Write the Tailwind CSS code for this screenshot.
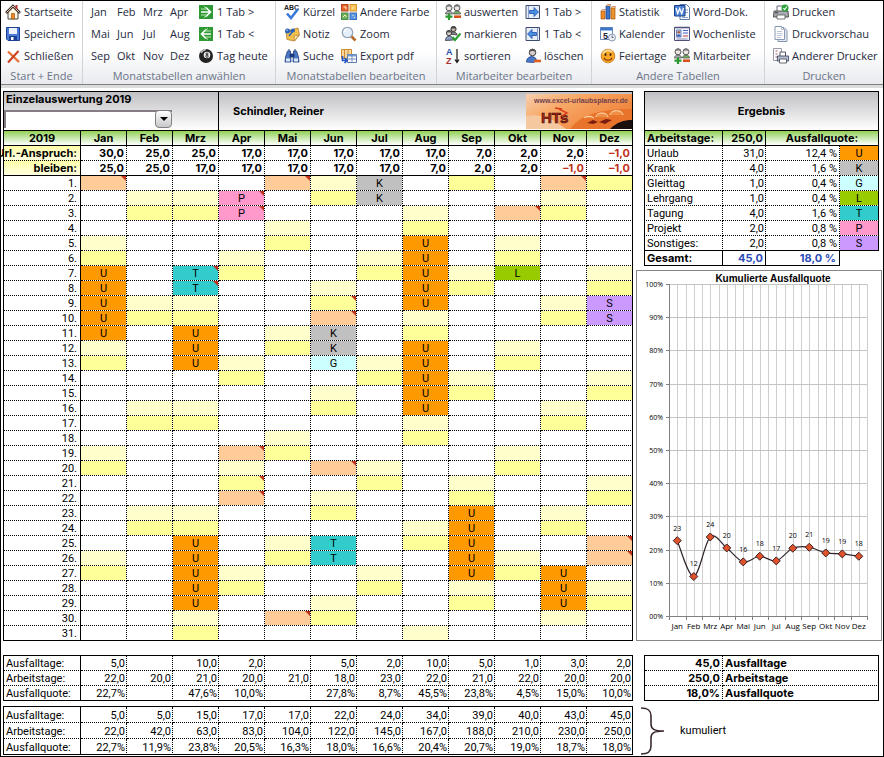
<!DOCTYPE html>
<html lang="de">
<head>
    <meta charset="UTF-8">
    <meta name="viewport" content="width=device-width, initial-scale=1.0">
    <title>Urlaubsplaner 2019 - Einzelauswertung</title>
    <script src="https://cdn.jsdelivr.net/npm/@tailwindcss/browser@4"></script>
</head>
<body class="bg-white text-black">
    <!-- Icon set -->
    <svg class="hidden">
        <symbol id="i-home" viewBox="0 0 16 16"><path d="M3 8v7h10V8L8 3z" fill="#fff6e0" stroke="#444"/><path d="M1 9l7-7 7 7" fill="none" stroke="#333" stroke-width="2.6"/><path d="M1.500 8.500L8 2l6.500 6.500" fill="none" stroke="#f0c0a0" stroke-width="1"/><path d="M11.500 1v4" fill="none" stroke="#b33" stroke-width="2"/><path d="M6.500 9.500h3V15h-3z" fill="#f08a1c" stroke="#8a4a10" stroke-width=".6"/></symbol>
        <symbol id="i-save" viewBox="0 0 16 16"><path d="M1.500 1.500h13v13H3l-1.500-1.500z" fill="#4a7ad8" stroke="#1d3f94"/><path d="M4 2h8v6H4z" fill="#eef3fb"/><path d="M4 10h8v4.500H4z" fill="#1d3f94"/><path d="M6 11h2.500v3H6z" fill="#fff"/></symbol>
        <symbol id="i-close" viewBox="0 0 16 16"><path d="M3 3.500L14 14" stroke="#e8703a" stroke-width="2.400"/><path d="M13.500 3L3 14.500" stroke="#c8401c" stroke-width="2"/></symbol>
        <symbol id="i-next" viewBox="0 0 16 16"><rect x="1" y="1" width="14" height="14" fill="#2f9a35"/><path d="M3 8h9M8 3.500L12.500 8 8 12.500" fill="none" stroke="#fff" stroke-width="1.600"/><path d="M3 5h6M3 11h6M6 2.500l3 2M6 13.500l3-2" stroke="#b8e6b0"/></symbol>
        <symbol id="i-prev" viewBox="0 0 16 16"><rect x="1" y="1" width="14" height="14" fill="#2f9a35"/><path d="M13 8H4M8 3.500L3.500 8 8 12.500" fill="none" stroke="#fff" stroke-width="1.600"/><path d="M7 5h6M7 11h6M10 2.500l-3 2M10 13.500l-3-2" stroke="#b8e6b0"/></symbol>
        <symbol id="i-ball" viewBox="0 0 16 16"><circle cx="8" cy="8" r="7" fill="#222"/><path d="M3 5a6 6 0 0 1 5-3.500" stroke="#bbb" stroke-width="1.500" fill="none"/><circle cx="9" cy="7" r="3.300" fill="#eee"/><circle cx="9" cy="5.900" r="1" fill="none" stroke="#111" stroke-width=".8"/><circle cx="9" cy="8.200" r="1.200" fill="none" stroke="#111" stroke-width=".8"/></symbol>
        <symbol id="i-abc" viewBox="0 0 16 16"><text x="0" y="6" font-size="7" font-weight="bold" font-family="Liberation Sans, sans-serif" fill="#222">ABC</text><path d="M3 9.500l4 4.500 7-9" fill="none" stroke="#3a7ad8" stroke-width="2.600"/></symbol>
        <symbol id="i-note" viewBox="0 0 16 16"><path d="M2 5l12-3 1.500 7-5 6L3 13.500z" fill="#f6c04c" stroke="#a8702a" stroke-width=".7"/><path d="M15 9l-4.500 6-.5-5z" fill="#fde9a8" stroke="#a8702a" stroke-width=".6"/><circle cx="3.500" cy="5" r="2.500" fill="#2b62b8"/><circle cx="9" cy="4.500" r="2" fill="#2b62b8"/><path d="M4 5h5l-4 5" stroke="#2b62b8" stroke-width="1.500" fill="none"/><circle cx="3" cy="4.300" r=".8" fill="#b6d6f8"/></symbol>
        <symbol id="i-find" viewBox="0 0 16 16"><path d="M3.500 3h3v4l.5 7H1l.5-5zM9.500 3h3l2 6 .5 5H9l.500-7z" fill="#4c78c4" stroke="#1f3c80" stroke-width=".8"/><path d="M6 6h4v3H6zM4 2h2M10 2h2" fill="#1f3c80" stroke="#1f3c80"/><path d="M2 10.500h4v3H2zM10 10.500h4v3h-4z" fill="#dce8fa"/></symbol>
        <symbol id="i-color" viewBox="0 0 16 16"><rect x=".5" y=".5" width="6.500" height="6.500" fill="#e8622c" stroke="#b8481c"/><rect x="9" y=".5" width="6.500" height="6.500" fill="#f8c45c" stroke="#d89428"/><rect x=".5" y="9" width="6.500" height="6.500" fill="#6cb060" stroke="#4a8a48"/><rect x="9" y="9" width="6.500" height="6.500" fill="#5c98e0" stroke="#3a6ec0"/><path d="M2.500 3h2.500v2.500M2 13l2-2 1.500 2M11 4h2M11.500 11.500h1M13 13.500h1" fill="none" stroke="#fff3c0"/></symbol>
        <symbol id="i-zoom" viewBox="0 0 16 16"><path d="M10 10l4.500 4.500" stroke="#b86a28" stroke-width="2.600"/><circle cx="6.500" cy="6.500" r="5.200" fill="#e6f0fa" stroke="#98a4b4" stroke-width="1.300"/><path d="M3.500 6a3 3 0 0 1 3-2.800" stroke="#fff" stroke-width="1.200" fill="none"/></symbol>
        <symbol id="i-export" viewBox="0 0 16 16"><path d="M.5 1.500h10v9H.500z" fill="#fbd9a0" stroke="#d08a30"/><path d="M3.500 1.500v9M7 1.500v9" stroke="#d08a30"/><path d="M6.500 6.500h9v8h-9z" fill="#fff" stroke="#5878a8"/><path d="M6.500 6.500h9v2h-9z" fill="#7c9cd0"/><path d="M6.500 11h9M11 7v7.500" stroke="#5878a8" stroke-width=".8"/><path d="M1.500 8v4.500H5M3.500 10l2.500 2.500L3.500 15" fill="none" stroke="#2458c8" stroke-width="1.700"/></symbol>
        <symbol id="i-people" viewBox="0 0 16 16"><path d="M.5 10c0-4 7-4 7 0z" fill="#a8a8b0" stroke="#555" stroke-width=".8"/><circle cx="4" cy="3.800" r="3" fill="#f0e8e4" stroke="#555"/><path d="M1 3.500c0-4 6-4 6 0-2-1.500-4-1.500-6 0z" fill="#777"/><path d="M8.500 10c0-4 7-4 7 0z" fill="#70b060" stroke="#555" stroke-width=".8"/><circle cx="12" cy="3.800" r="3" fill="#f0e8e4" stroke="#555"/><path d="M9 3.500c0-4 6-4 6 0-2-1.500-4-1.500-6 0z" fill="#777"/><path d="M4 9.500V16M.5 12.700h7" stroke="#2c9a30" stroke-width="2.200"/><path d="M9 12.700h7" stroke="#d8501c" stroke-width="2.600"/></symbol>
        <symbol id="i-mark" viewBox="0 0 16 16"><path d="M5 8c0-3 7-3 7 1z" fill="#888" stroke="#333" stroke-width=".8"/><circle cx="8.500" cy="3" r="2.600" fill="#c8b8a8" stroke="#333"/><path d="M6 2.500c1-3 4-3 5 0z" fill="#444"/><path d="M.5 14.500c0-6 7-6 8-.5z" fill="#8a9cc8" stroke="#333" stroke-width=".8"/><circle cx="4" cy="7" r="2.600" fill="#e0d8d8" stroke="#333"/><path d="M1.500 6.500c1-3 4-3 5 0z" fill="#555"/><path d="M7.500 11l2.500 3 5.500-6.500" fill="none" stroke="#2ca030" stroke-width="2.200"/></symbol>
        <symbol id="i-sort" viewBox="0 0 16 16"><text x="1" y="7" font-size="9" font-weight="bold" font-family="Liberation Sans, sans-serif" fill="#2850a8">A</text><text x="1" y="15.500" font-size="9" font-weight="bold" font-family="Liberation Sans, sans-serif" fill="#a83030">Z</text><path d="M12 1v13M10 11.500l2 3 2-3" fill="none" stroke="#111" stroke-width="1.200"/></symbol>
        <symbol id="i-tabnext" viewBox="0 0 16 16"><path d="M1 1.500h13.500v13H1z" fill="#e8eef8" stroke="#3c4c70"/><path d="M3.500 2v12" stroke="#8ca0c8"/><path d="M4.500 6.500H9v-3L13.500 8 9 12.500v-3H4.500z" fill="#4a90e0" stroke="#1c4ea8" stroke-width=".8"/></symbol>
        <symbol id="i-tabprev" viewBox="0 0 16 16"><path d="M1 1.500h13.500v13H1z" fill="#e8eef8" stroke="#3c4c70"/><path d="M12.500 2v12" stroke="#8ca0c8"/><path d="M11.500 6.500H7v-3L2.500 8 7 12.500v-3h4.500z" fill="#4a90e0" stroke="#1c4ea8" stroke-width=".8"/></symbol>
        <symbol id="i-userdel" viewBox="0 0 16 16"><path d="M1.500 14c0-7 10-7 10-1l-3 1.500z" fill="#4c78c8" stroke="#28448c" stroke-width=".8"/><circle cx="7.500" cy="4.500" r="3.300" fill="#d8cccc" stroke="#444"/><path d="M4 4.500c0-5 7-5 7 0-2-2-5-2-7 0z" fill="#555"/><path d="M9 13h7" stroke="#e0601c" stroke-width="2.600"/></symbol>
        <symbol id="i-stat" viewBox="0 0 16 16"><path d="M1 7h4v8H1z" fill="#f08c28" stroke="#a85410" stroke-width=".7"/><path d="M6 2h4v13H6z" fill="#3c74c8" stroke="#1c4488" stroke-width=".7"/><path d="M11 4h4v11h-4z" fill="#e8942c" stroke="#a85410" stroke-width=".7"/><path d="M6 2l1.500-1.500h3.500L10 2M1 7l1.500-1.500H6M11 4l1-1.500h3.500L15 4" fill="#f8c878" stroke="#844" stroke-width=".5"/></symbol>
        <symbol id="i-cal" viewBox="0 0 16 16"><path d="M.5 1.500h12v12H.500z" fill="#fff" stroke="#6888b8"/><path d="M.5 1.500h12v3H.500z" fill="#3c78c8"/><text x="3" y="12.500" font-size="9" font-weight="bold" font-family="Liberation Sans, sans-serif" fill="#223">5</text><circle cx="12" cy="11.500" r="3.500" fill="#eef2f8" stroke="#8898b0"/><path d="M12 9.500v2h1.500" fill="none" stroke="#335" stroke-width=".8"/></symbol>
        <symbol id="i-smile" viewBox="0 0 16 16"><circle cx="8" cy="8" r="6.800" fill="#f8a828" stroke="#c86c10" stroke-width=".8"/><path d="M3 6a5.500 5.500 0 0 1 9-2" stroke="#fde49c" stroke-width="1.600" fill="none"/><ellipse cx="5.500" cy="6.500" rx="1" ry="1.500" fill="#4a2408"/><ellipse cx="10.500" cy="6.500" rx="1" ry="1.500" fill="#4a2408"/><path d="M4 10c1.500 3 6.500 3 8 0" fill="none" stroke="#7a3408" stroke-width="1.200"/></symbol>
        <symbol id="i-word" viewBox="0 0 16 16"><path d="M6 .5h6.500l3 3v12H6z" fill="#fff" stroke="#5878a8"/><path d="M11 6h3M11 8.500h3M8 13.500h6" stroke="#88a0c8"/><path d="M.5 1.500h10.500v10.500H.500z" fill="#4c80d0" stroke="#16408c"/><path d="M2 4l1.700 5.500 2-5 2 5L9.500 4" fill="none" stroke="#fff" stroke-width="1.300"/></symbol>
        <symbol id="i-week" viewBox="0 0 16 16"><path d="M.5 1.500h15v13H.500z" fill="#f4f4fc" stroke="#50507c"/><path d="M.5 1.500h15" stroke="#50507c" stroke-width="1.500"/><path d="M2.500 4h4.500v7H2.500z" fill="#c8d8f4" stroke="#4868a8" stroke-width=".8"/><circle cx="4.700" cy="6.200" r="1.300" fill="#a85838"/><path d="M3 10.500c0-3 3.500-3 3.500 0z" fill="#3858b0"/><path d="M9 4.500h5M9 7h5" stroke="#4868c8"/><path d="M9 10h5" stroke="#c04838"/><path d="M2.500 13h11" stroke="#8890b8"/></symbol>
        <symbol id="i-print" viewBox="0 0 16 16"><path d="M4 7V2h7v5" fill="#fff" stroke="#667"/><path d="M1 7h14l.5 6H.500z" fill="#a8acb4" stroke="#444" stroke-width=".9"/><path d="M4 11h8v4H4z" fill="#fff" stroke="#555" stroke-width=".8"/><path d="M2 8.800h3" stroke="#333"/><circle cx="12" cy="4" r="3.500" fill="#2ca038"/><path d="M10.300 4l1.300 1.500 2.200-3" fill="none" stroke="#fff" stroke-width="1.100"/></symbol>
        <symbol id="i-preview" viewBox="0 0 16 16"><path d="M5 1.500h6l3 3v11H5z" fill="#e0e8f4" stroke="#8898b0"/><path d="M2 .5h6.500l3 3v10H2z" fill="#fff" stroke="#8898b0"/><path d="M8.500.5v3h3M4 5.500h5M4 7.500h5.500M4 9.500h5.500M4 11.500h4" fill="none" stroke="#a8b4c8" stroke-width=".8"/></symbol>
        <symbol id="i-printer2" viewBox="0 0 16 16"><path d="M.5.500h8v12h-8z" fill="#fff" stroke="#99a"/><path d="M2.500 3h2M2.500 6h2M2.500 9h2" stroke="#a05868" stroke-width="1.200"/><path d="M7 8V4h5.500v4" fill="#fff" stroke="#556"/><path d="M4.500 8h11l.2 5H4.300z" fill="#b8bed0" stroke="#404860" stroke-width=".9"/><path d="M6.500 11h7v4h-7z" fill="#fff" stroke="#445" stroke-width=".8"/></symbol>
    </svg>

    <div class="min-h-screen overflow-hidden border border-black font-['Inter',sans-serif] text-[11px] leading-[14px]">
        <!-- Ribbon -->
        <nav class="grid grid-cols-[82fr_193fr_161fr_155fr_173fr_118fr] border-b border-[#808080] bg-linear-to-b from-white from-60% to-[#e8eaee] font-['Open_Sans',sans-serif] text-[#262a3c] [&_button]:flex [&_button]:h-[22px] [&_button]:items-center [&_button]:gap-[3px] [&_button]:whitespace-nowrap [&_h2]:h-[17px] [&_h2]:text-center [&_h2]:leading-[17px] [&_h2]:text-[#6b7488] [&_svg]:size-4 [&_svg]:shrink-0">
            <section class="border-r border-[#d0d3d8]">
                <div class="pl-1">
                    <button><svg><use href="#i-home"/></svg>Startseite</button>
                    <button><svg><use href="#i-save"/></svg>Speichern</button>
                    <button><svg><use href="#i-close"/></svg>Schließen</button>
                </div>
                <h2>Start + Ende</h2>
            </section>
            <section class="border-r border-[#d0d3d8]">
                <div class="grid grid-cols-[26px_26px_27px_28px_auto] pl-2">
                    <button>Jan</button><button>Feb</button><button>Mrz</button><button>Apr</button>
                    <button><svg><use href="#i-next"/></svg>1 Tab &gt;</button>
                    <button>Mai</button><button>Jun</button><button>Jul</button><button>Aug</button>
                    <button><svg><use href="#i-prev"/></svg>1 Tab &lt;</button>
                    <button>Sep</button><button>Okt</button><button>Nov</button><button>Dez</button>
                    <button><svg><use href="#i-ball"/></svg>Tag heute</button>
                </div>
                <h2>Monatstabellen anwählen</h2>
            </section>
            <section class="border-r border-[#d0d3d8]">
                <div class="grid grid-cols-[57px_auto] pl-2">
                    <button><svg><use href="#i-abc"/></svg>Kürzel</button>
                    <button><svg><use href="#i-color"/></svg>Andere Farbe</button>
                    <button><svg><use href="#i-note"/></svg>Notiz</button>
                    <button><svg><use href="#i-zoom"/></svg>Zoom</button>
                    <button><svg><use href="#i-find"/></svg>Suche</button>
                    <button><svg><use href="#i-export"/></svg>Export pdf</button>
                </div>
                <h2>Monatstabellen bearbeiten</h2>
            </section>
            <section class="border-r border-[#d0d3d8]">
                <div class="grid grid-cols-[80px_auto] pl-2">
                    <button><svg><use href="#i-people"/></svg>auswerten</button>
                    <button><svg><use href="#i-tabnext"/></svg>1 Tab &gt;</button>
                    <button><svg><use href="#i-mark"/></svg>markieren</button>
                    <button><svg><use href="#i-tabprev"/></svg>1 Tab &lt;</button>
                    <button><svg><use href="#i-sort"/></svg>sortieren</button>
                    <button><svg><use href="#i-userdel"/></svg>löschen</button>
                </div>
                <h2>Mitarbeiter bearbeiten</h2>
            </section>
            <section class="border-r border-[#d0d3d8]">
                <div class="grid grid-cols-[74px_auto] pl-2">
                    <button><svg><use href="#i-stat"/></svg>Statistik</button>
                    <button><svg><use href="#i-word"/></svg>Word-Dok.</button>
                    <button><svg><use href="#i-cal"/></svg>Kalender</button>
                    <button><svg><use href="#i-week"/></svg>Wochenliste</button>
                    <button><svg><use href="#i-smile"/></svg>Feiertage</button>
                    <button><svg><use href="#i-people"/></svg>Mitarbeiter</button>
                </div>
                <h2>Andere Tabellen</h2>
            </section>
            <section>
                <div class="pl-2">
                    <button><svg><use href="#i-print"/></svg>Drucken</button>
                    <button><svg><use href="#i-preview"/></svg>Druckvorschau</button>
                    <button><svg><use href="#i-printer2"/></svg>Anderer Drucker</button>
                </div>
                <h2>Drucken</h2>
            </section>
        </nav>
        <div class="h-[3px] bg-[#dcdcdc]"></div>

        <main class="grid grid-cols-[630fr_246fr] gap-x-[3px] pt-[3px] pr-px pl-[2px]">
            <!-- Year overview -->
            <table class="w-full table-fixed border-separate border-spacing-0 border-t border-l border-black">
                <colgroup><col class="w-[77px]"><col span="12"></colgroup>
                <thead>
                    <tr>
                        <td colspan="4" class="h-[39px] border-r border-b border-black bg-linear-to-b from-[#c0c0c4] to-white p-0 align-top">
                            <label for="employee" class="block px-[2px] leading-[14px] font-bold">Einzelauswertung 2019</label>
                            <div class="relative mt-1 w-[168px]">
                                <select id="employee" class="block h-[18px] w-full appearance-none border-t-2 border-l-2 border-[#857c86] bg-white px-1"><option></option></select>
                                <span class="pointer-events-none absolute top-0 right-0 flex h-[18px] w-[17px] items-center justify-center rounded-sm border border-[#808080] bg-linear-to-b from-white to-[#c8c8cc]"><svg class="h-1 w-2" viewBox="0 0 8 4"><path d="M0 0h8L4 4z"/></svg></span>
                            </div>
                        </td>
                        <td colspan="9" class="h-[39px] border-r border-b border-black bg-linear-to-b from-[#c0c0c4] to-white p-0">
                            <div class="flex items-center justify-between pl-[14px]">
                                <span class="font-bold">Schindler, Reiner</span>
                                <svg class="h-[35px] w-[106px]" viewBox="0 0 106 35">
                                    <defs><linearGradient id="sky" x1="0" y1="0" x2="1" y2=".6"><stop offset="0" stop-color="#f6cfae"/><stop offset=".4" stop-color="#f8a866"/><stop offset="1" stop-color="#ee8038"/></linearGradient></defs>
                                    <rect width="106" height="35" fill="url(#sky)"/>
                                    <path d="M0 22c14-3 26 2 40 13H0z" fill="#f6c8a0"/>
                                    <path d="M44 35c8-10 20-20 62-20v20z" fill="#e8742c"/>
                                    <path d="M84 35c7-7 14-9 22-9v9z" fill="#1c100e"/>
                                    <path d="M61 29l6-3 5 2-5 2zM73 28l7-3 6 1-7 4z" fill="#7a1c10"/>
                                    <path d="M58 24a6 4 0 0 1 10 0M70 23a6 4 0 0 1 12 0M84 21a6 4 0 0 1 13 0" fill="#f09048" stroke="#fde0b8"/>
                                    <text x="8" y="9" font-size="7" font-weight="bold" font-family="Liberation Sans, sans-serif" fill="#70404c">www.excel-urlaubsplaner.de</text>
                                    <text x="15" y="29" font-size="15" font-weight="bold" font-family="Liberation Sans, sans-serif" fill="#a82414" stroke="#3a100c" stroke-width=".6">HTs</text>
                                    <path d="M33 15l8 4-5 3M29 14l7 1" fill="none" stroke="#d8401c" stroke-width="1.500"/>
                                </svg>
                            </div>
                        </td>
                    </tr>
                    <tr id="months"></tr>
                </thead>
                <tbody id="claims"></tbody>
                <tbody id="days"></tbody>
            </table>

            <!-- Result and chart -->
            <div>
                <div class="mr-[3px] ml-2">
                    <table class="w-full table-fixed border-separate border-spacing-0">
                        <colgroup><col class="w-[79px]"><col class="w-[43px]"><col><col class="w-[39px]"></colgroup>
                        <thead>
                            <tr><th colspan="4" class="h-10 border border-black bg-linear-to-b from-[#c0c0c4] to-white p-0 font-bold">Ergebnis</th></tr>
                            <tr class="[&>*]:bg-linear-to-b [&>*]:from-[#92d050] [&>*]:to-white">
                                <th class="h-[15px] border-x border-b border-black p-0 pl-[2px] text-left font-bold">Arbeitstage:</th>
                                <th class="border-r border-b border-black p-0 pr-[2px] text-right font-bold">250,0</th>
                                <th colspan="2" class="border-r border-b border-black p-0 font-bold">Ausfallquote:</th>
                            </tr>
                        </thead>
                        <tbody id="result"></tbody>
                        <tfoot>
                            <tr class="font-bold">
                                <td class="h-[15px] border-x border-b border-black p-0 pl-[2px]">Gesamt:</td>
                                <td class="border-r border-b border-black p-0 pr-[2px] text-right text-[#2c4cb8]">45,0</td>
                                <td class="border-r border-b border-black p-0 pr-[3px] text-right text-[#2c4cb8]">18,0 %</td>
                                <td></td>
                            </tr>
                        </tfoot>
                    </table>
                </div>
                <svg id="chart" class="mt-1 block w-full" viewBox="0 0 246 371" font-family="Open Sans, sans-serif" font-size="7"></svg>
            </div>

            <!-- Monthly and cumulated sums -->
            <table id="monthly" class="mt-[14px] w-full table-fixed border-separate border-spacing-0 border-t border-l border-black"></table>
            <div class="mt-[14px] mr-[3px] ml-2">
                <table class="w-full table-fixed border-separate border-spacing-0 border-t border-l border-black font-bold">
                    <colgroup><col class="w-[78px]"><col></colgroup>
                    <tbody>
                        <tr><td class="h-[15px] border-r border-b border-dotted border-black p-0 pr-[2px] text-right">45,0</td><td class="border-r border-b border-black p-0 pl-[2px] [border-bottom-style:dotted]">Ausfalltage</td></tr>
                        <tr><td class="h-[15px] border-r border-b border-dotted border-black p-0 pr-[2px] text-right">250,0</td><td class="border-r border-b border-black p-0 pl-[2px] [border-bottom-style:dotted]">Arbeitstage</td></tr>
                        <tr><td class="h-[15px] border-r border-b border-black p-0 pr-[2px] text-right [border-right-style:dotted]">18,0%</td><td class="border-r border-b border-black p-0 pl-[2px]">Ausfallquote</td></tr>
                    </tbody>
                </table>
            </div>
            <table id="cumulated" class="mt-[5px] w-full table-fixed border-separate border-spacing-0 border-t border-l border-black"></table>
            <div class="mt-[5px] flex items-center gap-3 pl-1 font-['Roboto',sans-serif]">
                <svg class="h-12 w-7" viewBox="0 0 28 48"><path d="M1 1c7 0 10 2 10 8v8c0 5 3 7 13 7-10 0-13 2-13 7v8c0 6-3 8-10 8" fill="none" stroke="#3a2a32" stroke-width="1.600"/></svg>
                kumuliert
            </div>
        </main>
    </div>

    <script>
        const months = ['Jan', 'Feb', 'Mrz', 'Apr', 'Mai', 'Jun', 'Jul', 'Aug', 'Sep', 'Okt', 'Nov', 'Dez'];
        const year = 2019;

        const fill = {
            U: 'bg-[#ff9900]', K: 'bg-[#c0c0c0]', G: 'bg-[#ccffff]', L: 'bg-[#99cc00]',
            T: 'bg-[#33cccc]', P: 'bg-[#ff99cc]', S: 'bg-[#cc99ff]',
            holiday: 'bg-[#ffcc99]', saturday: 'bg-[#ffffcc]', sunday: 'bg-[#ffff99]'
        };

        // [month, first day, last day, code]
        const entries = [
            [1, 1, 1, 'holiday'], [1, 7, 11, 'U'],
            [3, 7, 8, 'T'], [3, 11, 13, 'U'], [3, 25, 29, 'U'],
            [4, 2, 3, 'P'], [4, 19, 19, 'holiday'], [4, 22, 22, 'holiday'],
            [5, 1, 1, 'holiday'], [5, 30, 30, 'holiday'],
            [6, 10, 10, 'holiday'], [6, 11, 12, 'K'], [6, 13, 13, 'G'], [6, 20, 20, 'holiday'], [6, 25, 26, 'T'],
            [7, 1, 2, 'K'], [8, 5, 9, 'U'], [8, 12, 16, 'U'], [9, 23, 27, 'U'],
            [10, 3, 3, 'holiday'], [10, 7, 7, 'L'],
            [11, 1, 1, 'holiday'], [11, 27, 29, 'U'],
            [12, 9, 10, 'S'], [12, 25, 26, 'holiday']
        ];
        // days that carry a comment besides the holidays
        const comments = ['3-7', '3-8', '4-2', '4-3', '4-21', '6-9'];

        function codeFor(m, d) {
            const hit = entries.find(e => e[0] === m && d >= e[1] && d <= e[2]);
            if (hit) return hit[3];
            const date = new Date(year, m - 1, d);
            if (date.getMonth() !== m - 1) return '';
            return { 6: 'saturday', 0: 'sunday' }[date.getDay()] || '';
        }

        const byId = id => document.getElementById(id);
        const plainRow = "font-['Roboto',sans-serif] leading-[12px] [&>*]:pt-[2px]";

        byId('months').innerHTML = [year, ...months].map(m =>
            `<th class="h-[15px] border-r border-b border-black bg-linear-to-b from-[#92d050] to-white p-0 font-bold">${m}</th>`
        ).join('');

        const claims = [
            ['Url.-Anspruch:', '30,0 25,0 25,0 17,0 17,0 17,0 17,0 17,0 7,0 2,0 2,0 –1,0'],
            ['bleiben:', '25,0 25,0 17,0 17,0 17,0 17,0 17,0 7,0 2,0 2,0 –1,0 –1,0']
        ];
        byId('claims').innerHTML = claims.map(([label, values], i) => {
            const line = i ? '[border-bottom-style:solid]' : '[border-bottom-style:dotted]';
            return `<tr class="font-bold"><th class="h-[15px] border-r border-b border-black ${line} bg-linear-to-b from-[#ffffa8] to-[#ffffe0] p-0 pr-[3px]"><div class="flex justify-end whitespace-nowrap">${label}</div></th>` +
                values.split(' ').map((v, k) =>
                    `<td class="border-r border-b border-black ${k === 11 ? '[border-right-style:solid]' : '[border-right-style:dotted]'} ${line} p-0 pr-[2px] text-right ${v.startsWith('–') ? 'text-[#c0321c]' : ''}">${v}</td>`
                ).join('') + '</tr>';
        }).join('');

        let rows = '';
        for (let d = 1; d <= 31; d++) {
            const line = d === 31 ? '[border-bottom-style:solid]' : '[border-bottom-style:dotted]';
            rows += `<tr class="${plainRow}"><th class="h-[15px] border-r border-b border-black ${line} p-0 pr-[3px] text-right font-normal">${d}.</th>`;
            for (let m = 1; m <= 12; m++) {
                const code = codeFor(m, d);
                const flag = code === 'holiday' || comments.includes(m + '-' + d);
                rows += `<td class="relative border-r border-b border-black ${m === 12 ? '[border-right-style:solid]' : '[border-right-style:dotted]'} ${line} bg-clip-padding p-0 text-center ${fill[code] || ''}">${code.length === 1 ? code : ''}` +
                    (flag ? '<span class="absolute top-0 right-0 border-t-[5px] border-l-[5px] border-t-[#c0321c] border-l-transparent"></span>' : '') + '</td>';
            }
            rows += '</tr>';
        }
        byId('days').innerHTML = rows;

        const result = [
            ['Urlaub', '31,0', '12,4', 'U'], ['Krank', '4,0', '1,6', 'K'], ['Gleittag', '1,0', '0,4', 'G'],
            ['Lehrgang', '1,0', '0,4', 'L'], ['Tagung', '4,0', '1,6', 'T'], ['Projekt', '2,0', '0,8', 'P'],
            ['Sonstiges:', '2,0', '0,8', 'S']
        ];
        byId('result').innerHTML = result.map(([name, days, quota, code], i) => {
            const line = i === 6 ? '[border-bottom-style:solid]' : '[border-bottom-style:dotted]';
            return `<tr class="${plainRow}">
                <td class="h-[15px] border-x border-b border-black [border-right-style:dotted] ${line} p-0 pl-[2px]">${name}</td>
                <td class="border-r border-b border-black [border-right-style:dotted] ${line} p-0 pr-px text-right">${days}</td>
                <td class="border-r border-b border-black [border-right-style:dotted] ${line} p-0 pr-[2px] text-right">${quota} %</td>
                <td class="border-r border-b border-black ${line} bg-clip-padding p-0 text-center ${fill[code]}">${code}</td></tr>`;
        }).join('');

        function sums(id, height, data) {
            byId(id).innerHTML = '<colgroup><col class="w-[77px]"><col span="12"></colgroup><tbody>' + data.map(([label, values], i) => {
                const line = i === 2 ? '[border-bottom-style:solid]' : '[border-bottom-style:dotted]';
                return `<tr class="${plainRow}"><th class="${height} border-r border-b border-black ${line} p-0 pl-[2px] text-left font-normal">${label}</th>` +
                    values.split(' ').map((v, k) =>
                        `<td class="border-r border-b border-black ${k === 11 ? '[border-right-style:solid]' : '[border-right-style:dotted]'} ${line} p-0 pr-px text-right">${v === '-' ? '' : v}</td>`
                    ).join('') + '</tr>';
            }).join('') + '</tbody>';
        }
        sums('monthly', 'h-[15px]', [
            ['Ausfalltage:', '5,0 - 10,0 2,0 - 5,0 2,0 10,0 5,0 1,0 3,0 2,0'],
            ['Arbeitstage:', '22,0 20,0 21,0 20,0 21,0 18,0 23,0 22,0 21,0 22,0 20,0 20,0'],
            ['Ausfallquote:', '22,7% - 47,6% 10,0% - 27,8% 8,7% 45,5% 23,8% 4,5% 15,0% 10,0%']
        ]);
        sums('cumulated', 'h-4', [
            ['Ausfalltage:', '5,0 5,0 15,0 17,0 17,0 22,0 24,0 34,0 39,0 40,0 43,0 45,0'],
            ['Arbeitstage:', '22,0 42,0 63,0 83,0 104,0 122,0 145,0 167,0 188,0 210,0 230,0 250,0'],
            ['Ausfallquote:', '22,7% 11,9% 23,8% 20,5% 16,3% 18,0% 16,6% 20,4% 20,7% 19,0% 18,7% 18,0%']
        ]);

        // Chart
        const quota = [22.7, 11.9, 23.8, 20.5, 16.3, 18, 16.6, 20.4, 20.7, 19, 18.7, 18];
        const labels = [23, 12, 24, 20, 16, 18, 17, 20, 21, 19, 19, 18];
        const left = 33, right = 231, top0 = 14, bottom = 346;
        const step = (right - left) / 12;
        const pts = quota.map((q, i) => [left + step * (i + 0.5), bottom - (bottom - top0) * q / 100]);
        let svg = '<rect x=".5" y=".5" width="245" height="370" fill="#fff" stroke="#868686"/>';
        for (let i = 0; i <= 24; i++) {
            const x = Math.round(left + step * i / 2) + 0.5;
            svg += `<path d="M${x} ${top0}V${bottom}" stroke="#cfcfcf"/>`;
            if (i % 2 === 0) svg += `<path d="M${x} ${bottom}v4" stroke="#808080"/>`;
        }
        for (let p = 0; p <= 10; p++) {
            const y = Math.round(bottom - (bottom - top0) * p / 10) + 0.5;
            svg += `<path d="M${left} ${y}H${right}" stroke="#c4c4c4"/><path d="M${left - 3} ${y}h3" stroke="#808080"/>`;
            svg += `<text x="27" y="${y + 2}" text-anchor="end">${p === 0 ? '00' : p * 10}%</text>`;
        }
        svg += `<path d="M${left + 0.5} ${top0}V${bottom + 0.5}H${right}" fill="none" stroke="#808080"/>`;
        let path = `M${pts[0]}`;
        for (let i = 0; i < 11; i++) {
            const a = pts[i - 1] || pts[i], b = pts[i], c = pts[i + 1], e = pts[i + 2] || c;
            path += `C${b[0] + (c[0] - a[0]) / 6} ${b[1] + (c[1] - a[1]) / 6} ${c[0] - (e[0] - b[0]) / 6} ${c[1] - (e[1] - b[1]) / 6} ${c[0]} ${c[1]}`;
        }
        svg += `<path d="${path}" fill="none" stroke="#30242c" stroke-width="1.2"/>`;
        pts.forEach(([x, y], i) => {
            svg += `<path d="M${x} ${y - 4}l4 4-4 4-4-4z" fill="#e0522c" stroke="#3a2020"/>`;
            svg += `<text x="${x}" y="${y - 10}" text-anchor="middle">${labels[i]}</text>`;
            svg += `<text x="${x}" y="359" text-anchor="middle" font-size="8">${months[i]}</text>`;
        });
        svg += '<text x="137" y="12" text-anchor="middle" font-family="Liberation Sans, sans-serif" font-size="10" font-weight="bold">Kumulierte Ausfallquote</text>';
        byId('chart').innerHTML = svg;
    </script>
</body>
</html>
